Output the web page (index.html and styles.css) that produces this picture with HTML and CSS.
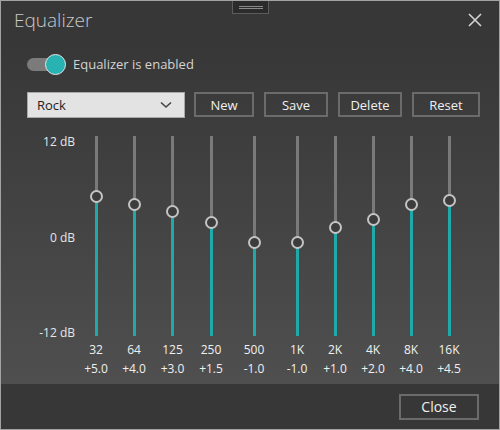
FILE: index.html
```html
<!DOCTYPE html>
<html>
<head>
<meta charset="utf-8">
<link rel="stylesheet" href="styles.css">
</head>
<body>
<div class="window">
  <div class="grip"><span></span><span></span></div>
  <div class="titlebar">
    <div class="title">Equalizer</div>
    <svg class="close-x" width="14" height="14" viewBox="0 0 14 14"><path d="M1 1 L13 13 M13 1 L1 13" stroke="#d4d4d4" stroke-width="1.6" fill="none"/></svg>
  </div>
  <div class="content">
    <div class="toggle-row">
      <div class="toggle"><div class="knob"></div></div>
      <span class="toggle-label">Equalizer is enabled</span>
    </div>
    <div class="controls">
      <div class="select">
        <span>Rock</span>
        <svg width="12" height="8" viewBox="0 0 12 8"><path d="M1 1.5 L6 6 L11 1.5" stroke="#444" stroke-width="1.6" fill="none"/></svg>
      </div>
      <button class="btn w60">New</button>
      <button class="btn w64">Save</button>
      <button class="btn w64">Delete</button>
      <button class="btn w68">Reset</button>
    </div>
    <div class="eq">
      <div class="scale">
        <span class="s-top">12 dB</span>
        <span class="s-mid">0 dB</span>
        <span class="s-bot">-12 dB</span>
      </div>
      <div class="bands">
        <div class="band"><div class="track"><div class="fill" style="height:140px"></div><div class="thumb" style="top:60px"></div></div><div class="freq">32</div><div class="val">+5.0</div></div>
        <div class="band"><div class="track"><div class="fill" style="height:132px"></div><div class="thumb" style="top:68px"></div></div><div class="freq">64</div><div class="val">+4.0</div></div>
        <div class="band"><div class="track"><div class="fill" style="height:125px"></div><div class="thumb" style="top:75px"></div></div><div class="freq">125</div><div class="val">+3.0</div></div>
        <div class="band"><div class="track"><div class="fill" style="height:114px"></div><div class="thumb" style="top:86px"></div></div><div class="freq">250</div><div class="val">+1.5</div></div>
        <div class="band wide"><div class="track"><div class="fill" style="height:94px"></div><div class="thumb" style="top:106px"></div></div><div class="freq">500</div><div class="val">-1.0</div></div>
        <div class="band"><div class="track"><div class="fill" style="height:94px"></div><div class="thumb" style="top:106px"></div></div><div class="freq">1K</div><div class="val">-1.0</div></div>
        <div class="band"><div class="track"><div class="fill" style="height:109px"></div><div class="thumb" style="top:91px"></div></div><div class="freq">2K</div><div class="val">+1.0</div></div>
        <div class="band"><div class="track"><div class="fill" style="height:117px"></div><div class="thumb" style="top:83px"></div></div><div class="freq">4K</div><div class="val">+2.0</div></div>
        <div class="band"><div class="track"><div class="fill" style="height:132px"></div><div class="thumb" style="top:68px"></div></div><div class="freq">8K</div><div class="val">+4.0</div></div>
        <div class="band"><div class="track"><div class="fill" style="height:136px"></div><div class="thumb" style="top:64px"></div></div><div class="freq">16K</div><div class="val">+4.5</div></div>
      </div>
    </div>
  </div>
  <div class="footer">
    <button class="btn close">Close</button>
  </div>
</div>
</body>
</html>
```
FILE: styles.css
```css
* { box-sizing: border-box; }
html, body { margin: 0; padding: 0; background: #373737; }
body { font-family: "Open Sans", "Noto Sans", sans-serif; color: #e8e8e8; }
.window {
  position: relative;
  width: 500px;
  height: 430px;
  border: 1px solid #a3a3a3;
  background: #373737;
  display: flex;
  flex-direction: column;
  overflow: hidden;
}
.grip {
  position: absolute;
  left: 231px;
  top: -1px;
  width: 37px;
  height: 14px;
  border: 1px solid #5c5c5c;
  background: #2b2b2b;
  display: flex;
  flex-direction: column;
  align-items: center;
  justify-content: center;
  gap: 1px;
}
.grip span { display: block; width: 24px; height: 1px; background: #8a8a8a; }
.titlebar {
  height: 42px;
  display: flex;
  align-items: center;
  justify-content: space-between;
  padding: 0 17px 0 13px;
  flex: none;
}
.title {
  font-size: 19px;
  font-weight: 300;
  color: #c9c9c9;
  margin-top: -4px;
}
.close-x { margin-top: -4px; }
.content {
  flex: 1;
  background: linear-gradient(#373737, #4f4f4f);
  padding: 9px 0 0 26px;
}
.toggle-row { display: flex; align-items: center; height: 24px; }
.toggle {
  position: relative;
  width: 38px;
  height: 13px;
  border-radius: 7px;
  background: #7b7b7b;
  margin-right: 8px;
}
.knob {
  position: absolute;
  right: -1px;
  top: -4px;
  width: 21px;
  height: 21px;
  border-radius: 50%;
  background: #28b2b2;
  border: 1px solid #e6e6e6;
}
.toggle-label { font-size: 13px; color: #d4d4d4; }
.controls { display: flex; align-items: flex-start; margin-top: 16px; height: 26px; }
.select {
  width: 158px;
  height: 26px;
  background: #e3e3e3;
  border: 1px solid #a8a8a8;
  display: flex;
  align-items: center;
  justify-content: space-between;
  padding: 0 12px 0 9px;
  font-size: 13px;
  color: #1e1e1e;
  margin-right: 9px;
}
.btn {
  font-family: inherit;
  height: 25px;
  background: transparent;
  border: 2px solid #6b6b6b;
  color: #f0f0f0;
  font-size: 13px;
  padding: 0;
  margin-right: 10px;
}
.w60 { width: 60px; }
.w64 { width: 64px; }
.w68 { width: 68px; margin-right: 0; }
.eq { display: flex; margin-top: 18px; }
.scale {
  position: relative;
  width: 48px;
  height: 200px;
  font-size: 12px;
  color: #e6e6e6;
}
.scale span { position: absolute; right: 0; line-height: 14px; }
.s-top { top: -1px; }
.s-mid { top: 95px; }
.s-bot { top: 190px; }
.bands { display: flex; margin-left: 2px; }
.band { width: 38px; display: flex; flex-direction: column; align-items: center; }
.band:nth-child(3) { width: 39px; }
.band.wide { width: 48px; }
.track {
  position: relative;
  width: 3px;
  height: 200px;
  background: #7a7a7a;
}
.fill { position: absolute; left: 0; bottom: 0; width: 3px; background: #1fa9a9; }
.thumb {
  position: absolute;
  left: -5px;
  width: 13px;
  height: 13px;
  margin-top: -6px;
  border-radius: 50%;
  border: 2px solid #c4c4c4;
  background: #3c3c3c;
}
.freq { font-size: 12px; margin-top: 6px; line-height: 16px; color: #f0f0f0; }
.val { font-size: 12px; margin-top: 3px; line-height: 16px; color: #f0f0f0; }
.footer {
  height: 45px;
  flex: none;
  display: flex;
  justify-content: flex-end;
  align-items: center;
  padding-right: 20px;
  background: #373737;
}
.btn.close { width: 80px; height: 26px; margin: 0; font-size: 14px; }
```
